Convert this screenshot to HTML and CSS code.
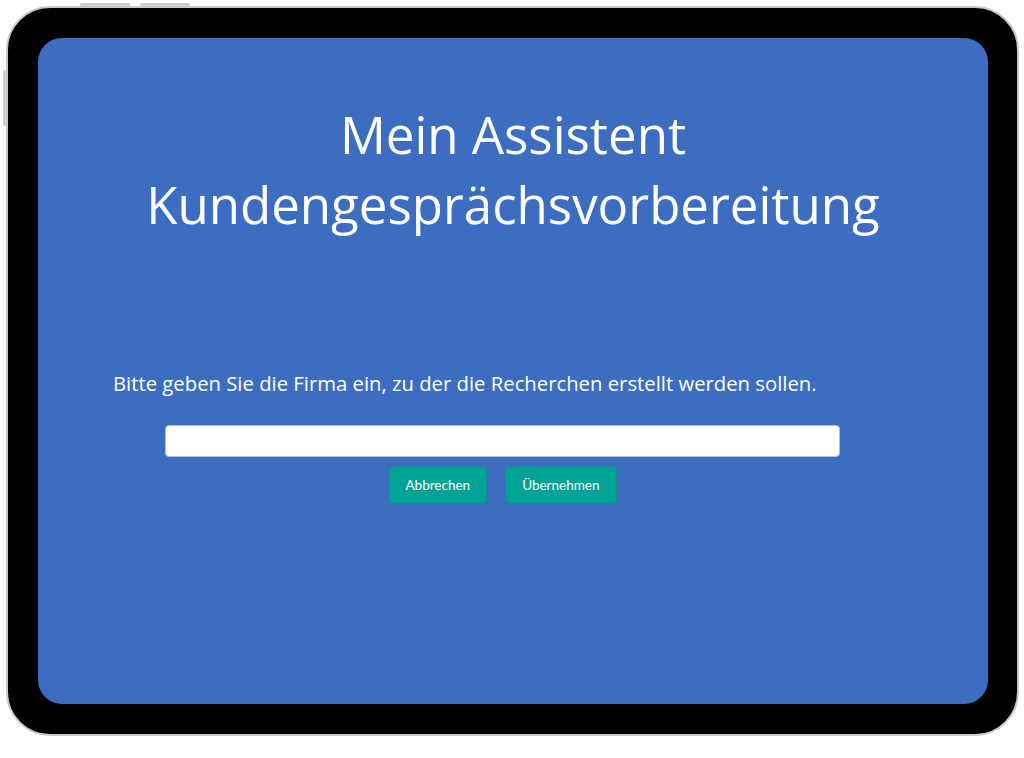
FILE: index.html
```html
<!DOCTYPE html>
<html lang="de">
<head>
<meta charset="utf-8">
<title>Mein Assistent</title>
<link rel="stylesheet" href="styles.css">
</head>
<body>
<div class="stage">
  <div class="tablet">
    <span class="hw hw-top1"></span>
    <span class="hw hw-top2"></span>
    <span class="hw hw-left"></span>
    <div class="screen">
      <h1 class="title">Mein Assistent<br>Kundengesprächsvorbereitung</h1>
      <p class="prompt">Bitte geben Sie die Firma ein, zu der die Recherchen erstellt werden sollen.</p>
      <div class="form">
        <input class="field" type="text">
        <div class="actions">
          <button class="btn">Abbrechen</button>
          <button class="btn">Übernehmen</button>
        </div>
      </div>
    </div>
  </div>
</div>
</body>
</html>
```

FILE: styles.css
```css
html, body {
  margin: 0;
  padding: 0;
  background: #ffffff;
}

.stage {
  padding: 6px 5px 0 6px;
  width: 1024px;
  height: 758px;
  box-sizing: border-box;
}

.tablet {
  position: relative;
  width: 1013px;
  height: 730px;
  box-sizing: border-box;
  background: #000;
  border: 2px solid #c9c9c9;
  border-radius: 44px;
  padding: 30px 29px 30px 30px;
}

.hw {
  position: absolute;
  background: #cfcfcf;
  border-radius: 2px;
}
.hw-top1 { top: -5px; left: 72px; width: 50px; height: 3px; }
.hw-top2 { top: -5px; left: 132px; width: 50px; height: 3px; }
.hw-left { left: -5px; top: 62px; width: 3px; height: 56px; }

.screen {
  height: 100%;
  background: #3d6dc1;
  border-radius: 24px;
  display: flex;
  flex-direction: column;
  align-items: center;
  color: #ffffff;
  font-family: "Open Sans", "Noto Sans", sans-serif;
}

.title {
  margin: 61px 0 0 0;
  font-weight: 400;
  font-size: 51px;
  line-height: 70px;
  text-align: center;
}

.prompt {
  align-self: flex-start;
  margin: 131px 0 0 75px;
  font-size: 20.3px;
  line-height: 26px;
}

.form {
  align-self: flex-start;
  margin-left: 127px;
  margin-top: 29px;
  display: flex;
  flex-direction: column;
  align-items: center;
}

.field {
  width: 675px;
  height: 32px;
  margin: 0;
  box-sizing: border-box;
  border: 1px solid #b9b9c8;
  border-radius: 4px;
  background: #fff;
}

.actions {
  display: flex;
  gap: 18px;
  margin-top: 9px;
}

.btn {
  height: 38px;
  padding: 0 16px;
  background: #00a396;
  color: #fff;
  border: 1px solid #178e8c;
  border-radius: 4px;
  font-family: "Lato", sans-serif;
  font-size: 13.5px;
  font-weight: 400;
}
```
